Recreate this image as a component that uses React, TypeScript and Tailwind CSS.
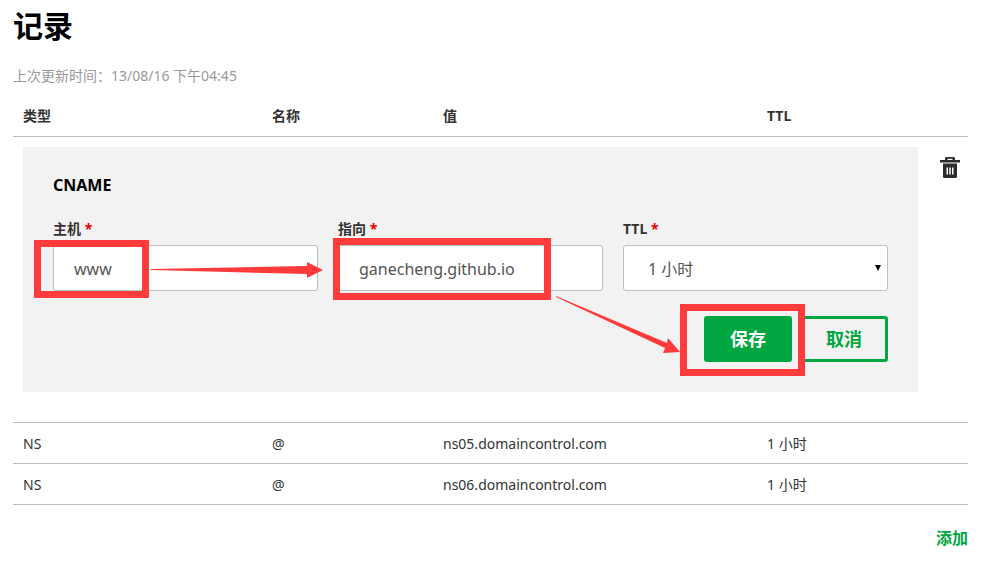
const FONT = "font-['Noto_Sans','Noto_Sans_CJK_SC',sans-serif]";

const records = [
  { type: "NS", name: "@", value: "ns05.domaincontrol.com", ttl: "1 小时" },
  { type: "NS", name: "@", value: "ns06.domaincontrol.com", ttl: "1 小时" },
];

function Label({ text }: { text: string }) {
  return (
    <label className="block h-[28px] text-[14px] leading-[24px] font-bold text-[#333]">
      {text} <span className="text-[#e00]">*</span>
    </label>
  );
}

function TrashIcon() {
  return (
    <svg width="20" height="21" viewBox="0 0 20 21" className="block">
      <path
        fill="#2b2b2b"
        fillRule="evenodd"
        d="M5 3V1.500C5 .7 5.700 0 6.500 0h7c.8 0 1.500.7 1.500 1.500V3h5v2.500H0V3h5zm2.500-1.300V3h5V1.700h-5zM3 6.500h14v13c0 .8-.7 1.500-1.500 1.500h-11C3.700 21 3 20.300 3 19.500v-13zM6.500 10.500v7h1.500v-7H6.500zm2.750 0v7h1.500v-7h-1.500zm2.750 0v7h1.500v-7H12z"
      />
    </svg>
  );
}

export default function App() {
  return (
    <div className={`relative h-[561px] w-[992px] overflow-hidden bg-white pl-[13px] pr-[24px] ${FONT}`}>
      <h1 className="pt-[5px] text-[30px] leading-[41px] font-bold text-black">记录</h1>
      <p className="mt-[18px] text-[14px] leading-[24px] text-[#999]">上次更新时间：13/08/16 下午04:45</p>

      {/* Table header */}
      <div className="mt-[8px] grid h-[41px] grid-cols-[249px_171px_324px_1fr] items-center border-b border-[#bfbfbf] pb-[2px] pl-[10px] text-[14px] font-bold text-[#333]">
        <span>类型</span>
        <span>名称</span>
        <span>值</span>
        <span>TTL</span>
      </div>

      {/* Edit row */}
      <div className="mt-[10px] flex pl-[10px]">
        <div className="h-[245px] w-[895px] bg-[#f2f2f2] px-[30px] pt-[26px]">
          <h2 className="text-[16px] leading-[24px] font-bold text-black">CNAME</h2>
          <div className="mt-[20px] grid grid-cols-3 gap-[20px]">
            <div>
              <Label text="主机" />
              <input
                readOnly
                value="www"
                className="h-[46px] w-full rounded-[3px] border border-[#bfbfbf] bg-white pl-[20px] pt-[2px] text-[16px] text-[#555] outline-none"
              />
            </div>
            <div>
              <Label text="指向" />
              <input
                readOnly
                value="ganecheng.github.io"
                className="h-[46px] w-full rounded-[3px] border border-[#bfbfbf] bg-white pl-[20px] pt-[2px] text-[16px] text-[#555] outline-none"
              />
            </div>
            <div>
              <Label text="TTL" />
              <div className="relative">
                <select className="h-[46px] w-full appearance-none rounded-[3px] border border-[#bfbfbf] bg-white pl-[24px] pt-[2px] text-[16px] text-[#555] outline-none">
                  <option>1 小时</option>
                </select>
                <span className="absolute right-[7px] top-[20px] h-0 w-0 border-x-[3px] border-t-[6px] border-x-transparent border-t-black" />
              </div>
            </div>
          </div>
          <div className="mt-[25px] flex justify-end gap-[8px]">
            <button className="h-[46px] w-[88px] rounded-[3px] bg-[#00a63f] text-[18px] font-bold text-white">保存</button>
            <button className="h-[46px] w-[88px] rounded-[3px] border-[3px] border-[#00a63f] text-[18px] font-bold text-[#00a63f]">取消</button>
          </div>
        </div>
        <div className="ml-[22px] pt-[10px]">
          <TrashIcon />
        </div>
      </div>

      {/* Records */}
      <div className="mt-[30px] border-t border-[#bfbfbf]">
        {records.map((r) => (
          <div
            key={r.value}
            className="grid h-[41px] grid-cols-[249px_171px_324px_1fr] items-center border-b border-[#bfbfbf] pl-[10px] text-[14px] text-[#333]"
          >
            <span>{r.type}</span>
            <span>{r.name}</span>
            <span>{r.value}</span>
            <span>{r.ttl}</span>
          </div>
        ))}
      </div>

      <div className="mt-[21px] text-right text-[16px] leading-[24px] font-bold text-[#00a63f]">添加</div>

      {/* Red annotations drawn on top of the screenshot */}
      <div className="absolute left-[34px] top-[240px] h-[58px] w-[115px] border-[7px] border-[#ff3b3b]" />
      <div className="absolute left-[333px] top-[238px] h-[62px] w-[218px] border-[7px] border-[#ff3b3b]" />
      <div className="absolute left-[680px] top-[304px] h-[72px] w-[125px] border-[7px] border-[#ff3b3b]" />
      <svg className="absolute left-0 top-0" width="992" height="561" viewBox="0 0 992 561">
        <polygon fill="#ff3b3b" points="151,269 307,266 307,262 323,270 307,278 307,274 151,270" />
        <polygon fill="#ff3b3b" points="556,296 667,343 668,338 680,352 663,353 665,348 556,297" />
      </svg>
    </div>
  );
}
